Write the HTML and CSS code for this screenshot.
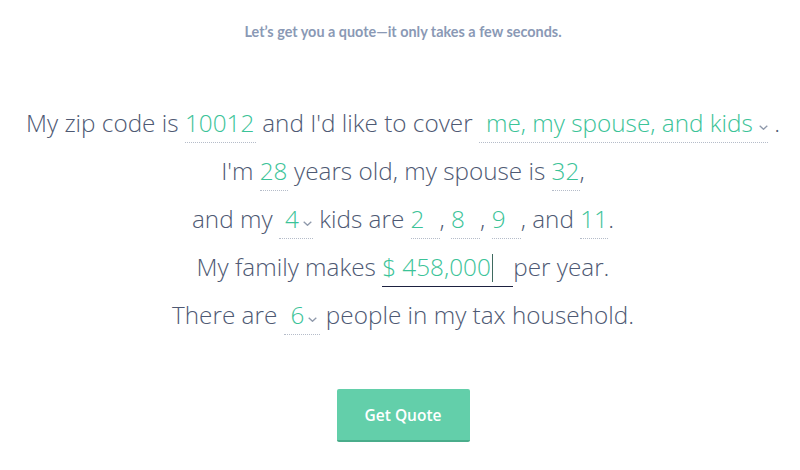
FILE: index.html
```html
<!DOCTYPE html>
<html>
<head>
<meta charset="utf-8">
<link rel="stylesheet" href="styles.css">
</head>
<body>
<div class="page">
  <p class="lead">Let’s get you a quote—it only takes a few seconds.</p>
  <div class="form">
    <div class="line">My zip code is <span class="field w-zip">10012</span> and I'd like to cover <span class="field select w-cover">me, my spouse, and kids<svg class="chev" viewBox="0 0 9 5"><path d="M0.7 0.7l3.8 3.6 3.8-3.6"/></svg></span> .</div>
    <div class="line">I'm <span class="field w-age">28</span> years old, my spouse is <span class="field w-age">32</span>,</div>
    <div class="line">and my <span class="field select w-num4">4<svg class="chev" viewBox="0 0 9 5"><path d="M0.7 0.7l3.8 3.6 3.8-3.6"/></svg></span> kids are <span class="field w-kid">2</span>, <span class="field w-kid">8</span>, <span class="field w-kid">9</span>, and <span class="field w-age">11</span>.</div>
    <div class="line">My family makes <span class="field focus w-inc">$ 458,000<span class="caret"></span></span>per year.</div>
    <div class="line">There are <span class="field select w-num6">6<svg class="chev" viewBox="0 0 9 5"><path d="M0.7 0.7l3.8 3.6 3.8-3.6"/></svg></span> people in my tax household.</div>
  </div>
  <div class="actions"><button class="btn">Get Quote</button></div>
</div>
</body>
</html>
```
FILE: styles.css
```css
html, body { margin: 0; padding: 0; background: #fff; overflow: hidden; }
.page { width: 800px; box-sizing: border-box; padding-left: 6px; text-align: center; }
.lead {
  margin: 0;
  padding-top: 23px;
  line-height: 17px;
  font-family: Lato, "Open Sans", sans-serif;
  font-size: 14.4px;
  font-weight: 700;
  color: #8a99b5;
}
.form {
  margin-top: 59px;
  font-family: "Open Sans", sans-serif;
  font-weight: 300;
  font-size: 24.3px;
  color: #4e5973;
}
.line { height: 48px; line-height: 48px; white-space: nowrap; }
.field {
  display: inline-block;
  box-sizing: border-box;
  color: #3bc398;
  border-bottom: 1px dotted #b5bcc9;
  line-height: 34px;
  text-align: left;
  padding-bottom: 2px;
}
.w-zip { width: 71px; }
.w-cover { width: 289px; padding-left: 7px; }
.w-age { width: 28px; }
.w-kid { width: 29px; }
.w-num4 { width: 34px; padding-left: 6px; }
.w-num6 { width: 36px; padding-left: 7px; }
.w-inc { width: 131px; }
.field.focus { border-bottom: 1px solid #1d2140; }
.chev { width: 9px; height: 5px; margin-left: 6px; vertical-align: 2px; }
.w-num4 .chev, .w-num6 .chev { margin-left: 4px; }
.chev path { fill: none; stroke: #8f99ab; stroke-width: 1.3; }
.caret { display: inline-block; width: 1px; height: 28px; background: #3f6a60; vertical-align: -6px; margin-left: 1px; }
.actions { margin-top: 50px; line-height: 0; }
.btn {
  width: 133px;
  height: 53px;
  padding: 0;
  border: 0;
  border-bottom: 2px solid #4aad8b;
  border-radius: 2px;
  background: #63cfaa;
  color: #fff;
  font-family: "Open Sans", sans-serif;
  font-size: 15.5px;
  font-weight: 600;
  line-height: 20px;
}
```
